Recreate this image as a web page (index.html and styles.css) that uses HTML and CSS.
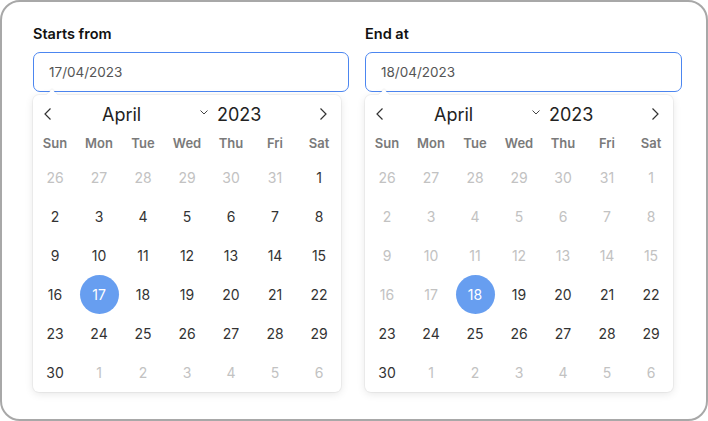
FILE: index.html
```html
<!DOCTYPE html>
<html>
<head>
<meta charset="utf-8">
<link rel="stylesheet" href="styles.css">
</head>
<body>
<div class="frame">
  <div class="field">
    <div class="label">Starts from</div>
    <div class="input">17/04/2023</div>
    <div class="popup">
      <div class="caret"></div>
      <div class="head">
        <span class="nav"><svg width="10" height="14" viewBox="0 0 10 14"><path d="M7.5 1.5 L2 7 L7.5 12.5" fill="none" stroke="#333" stroke-width="1.2"/></svg></span>
        <span class="month"><span>April</span><svg width="8" height="5" viewBox="0 0 8 5"><path d="M0.5 0.5 L4 4 L7.5 0.5" fill="none" stroke="#444" stroke-width="1"/></svg></span>
        <span class="year">2023</span>
        <span class="spacer"></span>
        <span class="nav"><svg width="10" height="14" viewBox="0 0 10 14"><path d="M2.5 1.5 L8 7 L2.5 12.5" fill="none" stroke="#333" stroke-width="1.2"/></svg></span>
      </div>
      <div class="grid">
        <span class="wd">Sun</span><span class="wd">Mon</span><span class="wd">Tue</span><span class="wd">Wed</span><span class="wd">Thu</span><span class="wd">Fri</span><span class="wd">Sat</span>
        <span class="d m">26</span><span class="d m">27</span><span class="d m">28</span><span class="d m">29</span><span class="d m">30</span><span class="d m">31</span><span class="d">1</span>
        <span class="d">2</span><span class="d">3</span><span class="d">4</span><span class="d">5</span><span class="d">6</span><span class="d">7</span><span class="d">8</span>
        <span class="d">9</span><span class="d">10</span><span class="d">11</span><span class="d">12</span><span class="d">13</span><span class="d">14</span><span class="d">15</span>
        <span class="d">16</span><span class="d"><b class="sel">17</b></span><span class="d">18</span><span class="d">19</span><span class="d">20</span><span class="d">21</span><span class="d">22</span>
        <span class="d">23</span><span class="d">24</span><span class="d">25</span><span class="d">26</span><span class="d">27</span><span class="d">28</span><span class="d">29</span>
        <span class="d">30</span><span class="d m">1</span><span class="d m">2</span><span class="d m">3</span><span class="d m">4</span><span class="d m">5</span><span class="d m">6</span>
      </div>
    </div>
  </div>
  <div class="field">
    <div class="label">End at</div>
    <div class="input">18/04/2023</div>
    <div class="popup">
      <div class="caret"></div>
      <div class="head">
        <span class="nav"><svg width="10" height="14" viewBox="0 0 10 14"><path d="M7.5 1.5 L2 7 L7.5 12.5" fill="none" stroke="#333" stroke-width="1.2"/></svg></span>
        <span class="month"><span>April</span><svg width="8" height="5" viewBox="0 0 8 5"><path d="M0.5 0.5 L4 4 L7.5 0.5" fill="none" stroke="#444" stroke-width="1"/></svg></span>
        <span class="year">2023</span>
        <span class="spacer"></span>
        <span class="nav"><svg width="10" height="14" viewBox="0 0 10 14"><path d="M2.5 1.5 L8 7 L2.5 12.5" fill="none" stroke="#333" stroke-width="1.2"/></svg></span>
      </div>
      <div class="grid">
        <span class="wd">Sun</span><span class="wd">Mon</span><span class="wd">Tue</span><span class="wd">Wed</span><span class="wd">Thu</span><span class="wd">Fri</span><span class="wd">Sat</span>
        <span class="d m">26</span><span class="d m">27</span><span class="d m">28</span><span class="d m">29</span><span class="d m">30</span><span class="d m">31</span><span class="d m">1</span>
        <span class="d m">2</span><span class="d m">3</span><span class="d m">4</span><span class="d m">5</span><span class="d m">6</span><span class="d m">7</span><span class="d m">8</span>
        <span class="d m">9</span><span class="d m">10</span><span class="d m">11</span><span class="d m">12</span><span class="d m">13</span><span class="d m">14</span><span class="d m">15</span>
        <span class="d m">16</span><span class="d m">17</span><span class="d"><b class="sel">18</b></span><span class="d">19</span><span class="d">20</span><span class="d">21</span><span class="d">22</span>
        <span class="d">23</span><span class="d">24</span><span class="d">25</span><span class="d">26</span><span class="d">27</span><span class="d">28</span><span class="d">29</span>
        <span class="d">30</span><span class="d m">1</span><span class="d m">2</span><span class="d m">3</span><span class="d m">4</span><span class="d m">5</span><span class="d m">6</span>
      </div>
    </div>
  </div>
</div>
</body>
</html>
```

FILE: styles.css
```css
* { box-sizing: border-box; }
html, body { margin: 0; padding: 0; background: #fff; }
body { font-family: Inter, "Noto Sans", sans-serif; color: #333; }

.frame {
  width: 708px;
  height: 421px;
  border: 2px solid #a8a8a8;
  border-radius: 20px;
  padding: 22px 24px 0 31px;
  display: grid;
  grid-template-columns: 316px 317px;
  column-gap: 16px;
  align-items: start;
}

.field { display: flex; flex-direction: column; }

.label {
  font-size: 14.5px;
  line-height: 20px;
  font-weight: 600;
  color: #111;
  margin-bottom: 8px;
}

.input {
  height: 40px;
  border: 1px solid #4c86f0;
  border-radius: 7px;
  padding-left: 15px;
  font-size: 13.5px;
  line-height: 38px;
  color: #555;
}

.popup {
  position: relative;
  width: 308px;
  margin-top: 3px;
  background: #fff;
  border-radius: 6px;
  box-shadow: 0 0 0 1px rgba(0,0,0,0.04), 0 2px 8px rgba(0,0,0,0.10);
}

.caret {
  position: absolute;
  left: 15px;
  top: -4px;
  width: 8px;
  height: 8px;
  background: #fff;
  transform: rotate(45deg);
  box-shadow: -1px -1px 1px rgba(0,0,0,0.05);
}

.head {
  height: 37px;
  display: flex;
  align-items: center;
  padding-top: 1px;
}
.nav {
  width: 30px;
  display: flex;
  justify-content: center;
  align-items: center;
}
.nav:last-child { margin-right: 3px; }
.month {
  width: 151px;
  display: flex;
  align-items: center;
  justify-content: space-between;
  padding-left: 39px;
  padding-right: 6px;
  font-size: 18px;
  color: #222;
}
.month svg { margin-top: -4px; }
.year {
  margin-left: 3px;
  font-size: 18px;
  color: #222;
}
.spacer { flex: 1; }

.grid {
  display: grid;
  grid-template-columns: repeat(7, 44px);
  grid-template-rows: 26px;
  grid-auto-rows: 39px;
}
.wd {
  height: 22px;
  display: flex;
  align-items: center;
  justify-content: center;
  font-size: 13px;
  font-weight: 600;
  color: #7a7a7a;
}
.d {
  display: flex;
  align-items: center;
  justify-content: center;
  font-size: 14px;
  color: #333;
}
.d.m { color: #c2c2c2; }
.sel {
  width: 39px;
  height: 39px;
  border-radius: 50%;
  background: #679ef0;
  color: #fff;
  font-weight: 400;
  display: flex;
  align-items: center;
  justify-content: center;
}
```
